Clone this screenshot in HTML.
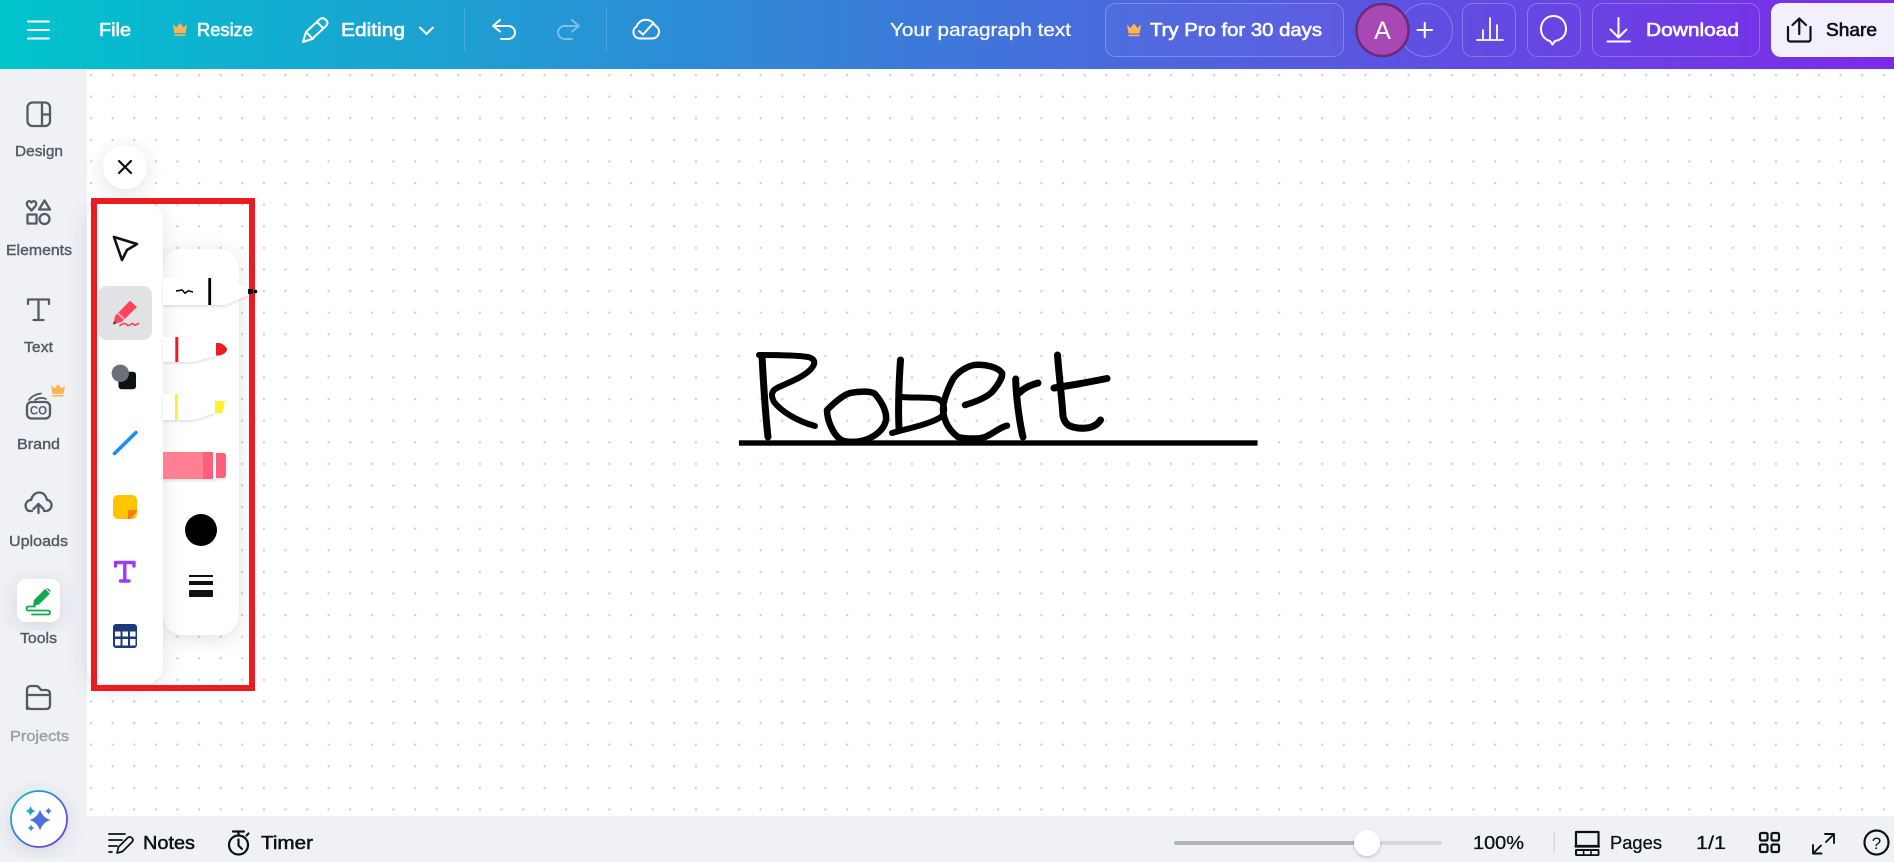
<!DOCTYPE html>
<html lang="en">
<head>
<meta charset="utf-8">
<title>Robert</title>
<style>
html,body{margin:0;padding:0;width:1894px;height:862px;overflow:hidden;background:#fff}
svg{display:block;position:absolute;left:0;top:0}
text{font-family:"Liberation Sans",Arial,sans-serif}
.t{font-size:18px;fill:#fff;stroke:#fff;stroke-width:.6px}
.s{font-size:15px;fill:#555b63;stroke:#555b63;stroke-width:.4px}
.b{font-size:18px;fill:#0d1216;stroke:#0d1216;stroke-width:.5px}
.w{fill:none;stroke:#fff;stroke-width:2;stroke-linecap:round;stroke-linejoin:round}
.g{fill:none;stroke:#555b63;stroke-width:2.3;stroke-linecap:round;stroke-linejoin:round}
.k{fill:none;stroke:#0d1216;stroke-width:2.2;stroke-linecap:round;stroke-linejoin:round}
.h{fill:none;stroke:#000;stroke-width:7;stroke-linecap:round;stroke-linejoin:round}
</style>
</head>
<body>
<svg width="1894" height="862" viewBox="0 0 1894 862" xmlns="http://www.w3.org/2000/svg">
<defs>
<linearGradient id="top" x1="0" y1="0" x2="1" y2="0"><stop offset="0" stop-color="#00c4cc"/><stop offset="1" stop-color="#7d2ae8"/></linearGradient>
<linearGradient id="ring" x1="0" y1="0" x2="1" y2="1"><stop offset="0" stop-color="#00c4cc"/><stop offset="1" stop-color="#7d2ae8"/></linearGradient>
<pattern id="dots" x="90" y="74" width="21.6" height="21.6" patternUnits="userSpaceOnUse"><rect width="2.2" height="2.2" fill="#d0d3da"/></pattern>
<filter id="sh" x="-40%" y="-20%" width="180%" height="140%"><feDropShadow dx="0" dy="4" stdDeviation="9" flood-color="#40475a" flood-opacity=".16"/></filter>
<filter id="sh2" x="-20%" y="-30%" width="140%" height="170%"><feDropShadow dx="0" dy="1.500" stdDeviation="1.200" flood-color="#40475a" flood-opacity=".18"/></filter>
<filter id="sh3" x="-20%" y="-30%" width="140%" height="170%"><feDropShadow dx="0" dy="1.500" stdDeviation="1.500" flood-color="#40475a" flood-opacity=".28"/></filter>
</defs>

<!-- canvas -->
<rect x="87" y="69" width="1807" height="747" fill="#fff"/>
<rect x="87" y="69" width="1807" height="747" fill="url(#dots)"/>

<!-- top bar -->
<rect x="0" y="0" width="1894" height="69" fill="url(#top)"/>
<path class="w" d="M28 21.500H49M28 30H49M28 38.500H49"/>
<text class="t" x="99" y="36" textLength="32" lengthAdjust="spacingAndGlyphs">File</text>
<g transform="translate(173 23)"><path fill="#ffb454" d="M0 1 3.500 4.500 7 0 10.500 4.500 14 1 12.500 10H1.500Z"/><rect x="1.500" y="11.200" width="11" height="1.600" fill="#ffb454"/></g>
<text class="t" x="197" y="36" textLength="56" lengthAdjust="spacingAndGlyphs">Resize</text>
<path class="w" d="M303 42 306 32 320 19Q323 17 326 20T326 26L312 39ZM306 32 313 39M317 22 323 28"/>
<text class="t" x="341" y="36" textLength="64" lengthAdjust="spacingAndGlyphs">Editing</text>
<path class="w" d="M420 27.500 426.500 34 433 27.500"/>
<rect x="464" y="8" width="1" height="43" fill="#fff" opacity=".16"/>
<path class="w" d="M500 20 493 26 500 31.500M493 26H508.500A6.500 6.500 0 0 1 508.500 39H501"/>
<path class="w" opacity=".4" d="M572 20 579 26 572 31.500M579 26H564.500A6.500 6.500 0 0 0 564.500 39H572"/>
<rect x="606" y="8" width="1" height="43" fill="#fff" opacity=".16"/>
<path class="w" d="M639.500 38.500A6.500 6.500 0 0 1 636.500 26.500 10 10 0 0 1 655 25.500 6.800 6.800 0 0 1 652.500 38.500Z"/>
<path class="w" d="M639 31 643 34.500 653 23.500"/>
<text class="t" x="890" y="36" textLength="181" lengthAdjust="spacingAndGlyphs" style="stroke-width:.3px;fill:#f2f6ff">Your paragraph text</text>

<rect x="1105.500" y="3.500" width="238" height="53" rx="10" fill="#fff" fill-opacity=".03" stroke="#fff" stroke-opacity=".25"/>
<g transform="translate(1127 23.500)"><path fill="#ffb454" d="M0 1 3.500 4.500 7 0 10.500 4.500 14 1 12.500 10H1.500Z"/><rect x="1.500" y="11.200" width="11" height="1.600" fill="#ffb454"/></g>
<text class="t" x="1150" y="36" textLength="172" lengthAdjust="spacingAndGlyphs">Try Pro for 30 days</text>

<circle cx="1426" cy="30" r="26.500" fill="none" stroke="#fff" stroke-opacity=".25"/>
<path class="w" d="M1417.500 30H1432M1424.750 22.750V37.250"/>
<circle cx="1382.500" cy="30" r="26" fill="#a947b5" stroke="#6b2a78" stroke-width="2.500"/>
<text x="1382.500" y="39" text-anchor="middle" font-size="25" fill="#fff">A</text>

<rect x="1462.500" y="3.500" width="53" height="53" rx="10" fill="none" stroke="#fff" stroke-opacity=".25"/>
<path class="w" d="M1477 40H1503M1483 30V40M1490 18V40M1497 25V40" style="stroke-width:1.800"/>
<rect x="1527.500" y="3.500" width="53" height="53" rx="10" fill="none" stroke="#fff" stroke-opacity=".25"/>
<path class="w" d="M1553.500 16C1546 16 1541 22 1541 29 1541 36 1546 40 1550 41L1552.500 44.500 1555 41C1561 40 1566 36 1566 29 1566 22 1561 16 1553.500 16Z"/>
<rect x="1592.500" y="3.500" width="167" height="53" rx="10" fill="none" stroke="#fff" stroke-opacity=".25"/>
<path class="w" d="M1618.500 18V37M1610.500 29.500 1618.500 37.500 1626.500 29.500M1607.500 41.500H1630"/>
<text class="t" x="1646" y="36" textLength="93" lengthAdjust="spacingAndGlyphs">Download</text>

<rect x="1771" y="3" width="140" height="54" rx="10" fill="#f3effc"/>
<path class="k" d="M1788 27V39.500A2 2 0 0 0 1790 41.500H1808.500A2 2 0 0 0 1810.500 39.500V27M1799.250 34V18.500M1792.500 25 1799.250 18.500 1806 25"/>
<text class="b" x="1826" y="36" textLength="51" lengthAdjust="spacingAndGlyphs" style="stroke-width:.6px">Share</text>

<!-- sidebar -->
<rect x="0" y="69" width="87" height="793" fill="#f0f1f5"/>
<!-- bottom bar -->
<rect x="87" y="816" width="1807" height="46" fill="#f0f1f5"/>

<!-- design -->
<rect class="g" x="27.500" y="102.500" width="22.500" height="23.500" rx="5"/>
<path class="g" d="M42 103V126M42 114.500H50"/>
<text class="s" x="15" y="156" textLength="48" lengthAdjust="spacingAndGlyphs">Design</text>
<!-- elements -->
<path class="g" d="M31.500 210.500 27.500 206C25.500 203 28.500 199 31.500 202.500 34.500 199 37.500 203 35.500 206Z"/>
<path class="g" d="M44.500 200.500 50 209.500H39Z"/>
<rect class="g" x="27.500" y="214.500" width="9" height="9"/>
<circle class="g" cx="44.500" cy="219" r="5"/>
<text class="s" x="6" y="255" textLength="66" lengthAdjust="spacingAndGlyphs">Elements</text>
<!-- text -->
<path class="g" d="M28 304V299.500H49V304M38.500 299.500V320M33.500 320H43.500"/>
<text class="s" x="24" y="352" textLength="29" lengthAdjust="spacingAndGlyphs">Text</text>
<!-- brand -->
<rect class="g" x="27" y="402" width="23" height="16.500" rx="4.500"/>
<text x="38.500" y="414.500" text-anchor="middle" font-size="11.500" font-weight="bold" fill="#555b63">CO</text>
<path class="g" d="M29 400C32 396 37 394 41 393.500M35 400C38 398 42 397 46 399" style="stroke-width:1.700"/>
<g transform="translate(51 384)"><path fill="#ffb454" d="M0 1 3.500 4.500 7 0 10.500 4.500 14 1 12.500 10H1.500Z"/><rect x="1.500" y="11" width="11" height="1.600" fill="#ffb454"/></g>
<text class="s" x="17" y="449" textLength="43" lengthAdjust="spacingAndGlyphs">Brand</text>
<!-- uploads -->
<path class="g" d="M32 511H30C26 511 25 506 26 503.500 27.500 500.500 30 500 31 500 32 496 35 492.500 39 492.500 44 492.500 46 496 47 500 50 500 52 503 51.500 506 51 509 48.500 511 46 511H44"/>
<path class="g" d="M38.500 513V504M33.500 509 38.500 504 43.500 509"/>
<text class="s" x="9" y="546" textLength="59" lengthAdjust="spacingAndGlyphs">Uploads</text>
<!-- tools -->
<rect x="17" y="579" width="43" height="43" rx="9" fill="#fff" filter="url(#sh)"/>
<path fill="#12a84e" d="M34 600 44.500 589.500Q46.500 587.500 49 589L50 590Q51 592 49.500 594L39 604.500 33 606Z"/>
<path d="M46 589 50.500 593.500" stroke="#fff" stroke-width="1.200"/>
<path fill="none" stroke="#12a84e" stroke-width="1.800" stroke-linecap="round" stroke-linejoin="round" d="M35 606.500H28.500Q26.500 606.500 26.500 608.500T28.500 610.500H48Q50 610.500 50 612.500T48 614.500H32"/>
<text class="s" x="20" y="643" textLength="37" lengthAdjust="spacingAndGlyphs">Tools</text>
<!-- projects -->
<path class="g" d="M27 709V690Q27 686 31 686H36Q38 686 39 687.500L41 690H46Q50 690 50 694V705Q50 709 46 709H31Q27 709 27 705ZM27 695H50"/>
<text class="s" x="10" y="741" textLength="59" lengthAdjust="spacingAndGlyphs" style="fill:#9a9fa6;stroke:#9a9fa6">Projects</text>
<!-- magic -->
<circle cx="39" cy="819" r="28" fill="#fff" stroke="url(#ring)" stroke-width="1.800" filter="url(#sh)"/>
<path fill="#4d72dd" transform="translate(40 820)" d="M0-10.500Q2.500-2.500 10.500 0 2.500 2.500 0 10.500-2.500 2.500-10.500 0-2.500-2.500 0-10.500Z"/>
<path fill="#1ca3c9" transform="translate(30.500 811)" d="M0-5Q1-1 5 0 1 1 0 5-1 1-5 0-1-1 0-5Z"/>
<path fill="#5c6ce0" transform="translate(48.500 811)" d="M0-3.500Q.8-.8 3.500 0 .8.8 0 3.500-.8.8-3.500 0-.8-.8 0-3.500Z"/>
<path fill="#3a8fd6" transform="translate(31 828)" d="M0-3.500Q.8-.8 3.500 0 .8.8 0 3.500-.8.8-3.500 0-.8-.8 0-3.500Z"/>

<!-- bottom left -->
<path class="k" d="M109 834H125M109 840H122M109 846H117M109 852H112" style="stroke-width:1.800"/>
<path class="k" d="M117 853 118.500 847 128 837.500Q130 836 132 838T132 842L122.500 851.500Z" style="stroke-width:1.700"/>
<text class="b" x="143" y="849" textLength="52" lengthAdjust="spacingAndGlyphs">Notes</text>
<circle class="k" cx="238.500" cy="845" r="9.500"/>
<path class="k" d="M233 831.500H244M238.500 832V835M238.500 839.500V845.500L242 849M246.500 835.500 248.500 833.500"/>
<text class="b" x="261" y="849" textLength="52" lengthAdjust="spacingAndGlyphs">Timer</text>

<!-- bottom right -->
<rect x="1174" y="841" width="194" height="4" rx="2" fill="#b0b5bd"/>
<rect x="1367" y="841" width="75" height="4" rx="2" fill="#d6d8de"/>
<circle cx="1367" cy="843" r="13" fill="#fff" filter="url(#sh3)"/>
<text class="b" x="1473" y="849" textLength="51" lengthAdjust="spacingAndGlyphs" style="stroke-width:.3px">100%</text>
<rect x="1553.500" y="832" width="1.500" height="21" fill="#d6d8de"/>
<rect class="k" x="1576" y="832" width="22.500" height="14" style="fill:none"/>
<path class="k" d="M1575.500 846.500H1599"/>
<rect x="1575" y="849" width="24.500" height="7" rx="1.500" fill="#0d1216"/>
<rect x="1577" y="851" width="5.800" height="3.200" fill="#f0f1f5"/>
<rect x="1584.400" y="851" width="5.800" height="3.200" fill="#f0f1f5"/>
<rect x="1591.800" y="851" width="5.800" height="3.200" fill="#f0f1f5"/>
<text class="b" x="1610" y="849" textLength="52" lengthAdjust="spacingAndGlyphs" style="stroke-width:.3px">Pages</text>
<text class="b" x="1696" y="849" textLength="30" lengthAdjust="spacingAndGlyphs" style="stroke-width:.3px">1/1</text>
<rect class="k" x="1760" y="833" width="7.500" height="7.500" rx="1.500"/>
<rect class="k" x="1771.500" y="833" width="7.500" height="7.500" rx="1.500"/>
<rect class="k" x="1760" y="844.500" width="7.500" height="7.500" rx="1.500"/>
<rect class="k" x="1771.500" y="844.500" width="7.500" height="7.500" rx="1.500"/>
<path class="k" d="M1825 834H1834V843M1834 834 1826 842M1813 845V853.500H1821.500M1813 853.500 1821 845.500" style="stroke-width:1.900"/>
<circle class="k" cx="1876.500" cy="842.500" r="12"/>
<text x="1876.500" y="849" text-anchor="middle" font-size="17" fill="#0d1216">?</text>

<!-- handwriting -->
<path class="h" d="M759 355C775 355 795 355 808 357 816 359 816 364 810 370 802 378 785 384 777 388 771 391 771 396 774 402 782 412 797 421 815 426" style="stroke-width:6"/>
<path class="h" d="M762 356C763 375 765 410 768 437"/>
<path class="h" d="M827 410C835 402 843 395 850 393 860 391 872 391 875 394 882 402 887 412 886 420 884 430 876 435 870 438 860 443 845 443 840 439 833 434 827 420 827 410Z" style="stroke-width:6.500"/>
<path class="h" d="M900.500 360C899 380 898 410 899 428"/>
<path class="h" d="M900 397C915 398 932 397 938 399 945 402 946 412 941 417 930 424 910 428 892 433" style="stroke-width:6"/>
<path class="h" d="M965 405C975 402 986 398 992 392 998 385 1003 377 1002 373 998 367 985 364 974 365 965 367 957 373 953 379 947 390 943 402 943 410 944 422 950 431 958 437 966 439 980 439 985 437 993 434 1000 427 1007 425.700" style="stroke-width:6.500"/>
<path class="h" d="M1015.700 379C1016 395 1019 420 1023 437"/>
<path class="h" d="M1019 393C1024 388 1030 385 1038 383"/>
<path class="h" d="M1057.500 355C1059 375 1062 400 1063 416 1065 425 1070 427 1078 428 1088 429 1096 427 1100.500 420"/>
<path class="h" d="M1054 388 1081 383.500 1107 378.500"/>
<rect x="739" y="440.300" width="518.500" height="5.400" fill="#000"/>

<!-- close -->
<circle cx="125" cy="167" r="22" fill="#fff" filter="url(#sh)"/>
<path class="k" d="M119 161 131 173M131 161 119 173" style="stroke-width:2.200"/>

<!-- secondary panel -->
<rect x="163" y="249" width="76" height="386" rx="20" fill="#fff" filter="url(#sh)"/>
<!-- main panel -->
<rect x="87" y="203" width="76" height="481" rx="18" fill="#fff" filter="url(#sh)"/>

<!-- tool icons -->
<path class="k" d="M114 237 137 244 127 250 122 260Z" style="stroke-width:2.600"/>
<rect x="98" y="286" width="54" height="54" rx="9" fill="#e0e2e6"/>
<path fill="#ff4458" d="M130 300.700 137 307 121.700 322 113.500 324 115 316Z"/>
<path d="M117 312.500 124.500 319.500" stroke="#ffb3bb" stroke-width="1.600"/>
<path fill="#333" d="M113 324.500 114 321 116.500 323.500Z"/>
<path fill="none" stroke="#ff4458" stroke-width="1.700" stroke-linecap="round" d="M120 325.500C123 323 126 323 127 325 129 327 131 323 133 323.500 134 326 136 325 138.500 323.500"/>
<rect x="118.500" y="371.700" width="17.500" height="17.500" rx="3" fill="#0d1216"/>
<circle cx="120.300" cy="373.300" r="8.700" fill="#6c7076"/>
<path fill="none" stroke="#1a8cff" stroke-width="3.600" stroke-linecap="round" d="M114.500 453.500 136 432.500"/>
<rect x="113" y="495" width="24" height="24" rx="5" fill="#ffc400"/>
<path fill="#ff7a1a" d="M128 519V512Q128 510 130 510H137V511Q133 516 130 519Z"/>
<path fill="none" stroke="#9d3cff" stroke-width="3.400" stroke-linecap="round" stroke-linejoin="round" d="M115.500 566V562.500H134V566M124.800 562.500V581M120.500 581H129"/>
<rect x="113" y="624" width="24" height="24" rx="3" fill="#1e3a7d"/>
<rect x="115" y="631.500" width="5.500" height="5" fill="#fff"/><rect x="122.500" y="631.500" width="5.500" height="5" fill="#fff"/><rect x="130" y="631.500" width="5.500" height="5" fill="#fff"/>
<rect x="115" y="639" width="5.500" height="6.500" fill="#fff"/><rect x="122.500" y="639" width="5.500" height="6.500" fill="#fff"/><rect x="130" y="639" width="5.500" height="6.500" fill="#fff"/>

<!-- pens -->
<path fill="#fff" filter="url(#sh2)" d="M163 278H225L249 288V295L225 305H163Z"/>
<path fill="none" stroke="#000" stroke-width="1.500" stroke-linejoin="round" d="M176 291 182.300 290 185 293.300 188.300 290.700 193 292"/>
<rect x="208.300" y="278" width="2.800" height="27" fill="#000"/>
<path fill="#fff" filter="url(#sh2)" d="M163 337H192L216 344V356L192 362H163Z"/>
<rect x="175.300" y="337" width="3" height="25" fill="#ed1c24"/>
<path fill="#ed1c24" d="M216 343H220Q227 346 227 349.500 227 353 220 355.500H216Z"/>
<path fill="#fff" filter="url(#sh2)" d="M163 394H193L215 401V413L193 420H163Z"/>
<rect x="175" y="394" width="2.800" height="26" fill="#fff02e"/>
<path fill="#fff02e" d="M215 401H225L222.500 413H215Z"/>
<g filter="url(#sh2)">
<rect x="163" y="452" width="50" height="27" fill="#ff8093"/>
<rect x="203" y="452" width="10" height="27" fill="#ff5f78"/>
<rect x="213" y="452" width="3" height="27" fill="#fff"/>
<path fill="#ff5f78" d="M216 453H223Q226 453 226 456V474Q226 478 223 478H216Z"/>
</g>
<circle cx="201" cy="530" r="16" fill="#000"/>
<rect x="189" y="575" width="24" height="2" fill="#0d1216"/>
<rect x="189" y="581" width="24" height="4" fill="#0d1216"/>
<rect x="189" y="590" width="24" height="7" rx="1" fill="#0d1216"/>

<!-- red frame -->
<rect x="94" y="201" width="158" height="487" fill="none" stroke="#ea1c1f" stroke-width="6"/>
<rect x="248" y="289" width="5" height="5" fill="#1a0a0a"/>
<circle cx="255.500" cy="291.500" r="1.800" fill="#000"/>
</svg>
</body>
</html>
